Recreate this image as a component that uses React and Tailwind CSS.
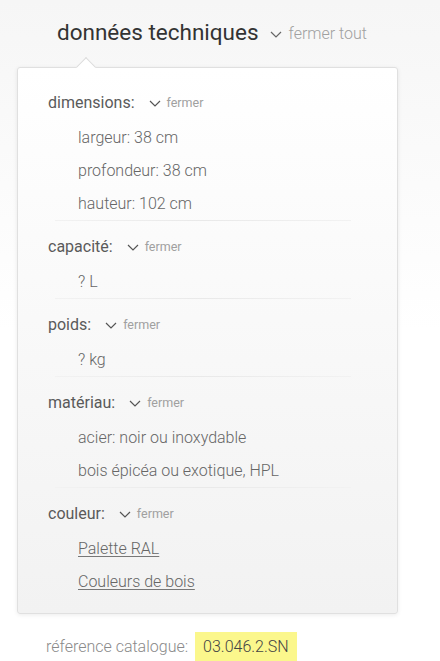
const sections = [
  {
    label: "dimensions:",
    items: ["largeur: 38 cm", "profondeur: 38 cm", "hauteur: 102 cm"],
  },
  { label: "capacité:", items: ["? L"] },
  { label: "poids:", items: ["? kg"] },
  {
    label: "matériau:",
    items: ["acier: noir ou inoxydable", "bois épicéa ou exotique, HPL"],
  },
  { label: "couleur:", items: ["Palette RAL", "Couleurs de bois"], links: true },
];

function Chevron({ className }) {
  return (
    <svg viewBox="0 0 12 7" className={className} fill="none" stroke="currentColor" strokeWidth="1.2">
      <path d="M1 1l5 5 5-5" />
    </svg>
  );
}

function Section({ label, items, links, last }) {
  return (
    <div className="pt-2">
      <div className="flex h-9 items-center">
        <span className="text-[16px] text-[#5a5a5a]">{label}</span>
        <Chevron className="ml-3.5 h-[7px] w-[12px] text-[#555]" />
        <span className="ml-1.5 text-[12.5px] text-[#a0a0a0]">fermer</span>
      </div>
      <ul className="pl-[30px]">
        {items.map((item) => (
          <li key={item} className="flex h-[33px] items-center text-[16px] font-light text-[#666]">
            {links ? <a className="underline underline-offset-2 decoration-[#777]">{item}</a> : item}
          </li>
        ))}
      </ul>
      {!last && (
        <div className="ml-[7px] h-px w-[296px] bg-gradient-to-r from-[#f2f2f2] via-[#e9e9e9] to-[#f2f2f2]" />
      )}
    </div>
  );
}

export default function App() {
  return (
    <div
      className="min-h-[661px] w-[440px] bg-gradient-to-b from-[#f6f6f6] via-white to-white pt-[18px]"
      style={{ fontFamily: "Roboto, 'Liberation Sans', sans-serif" }}
    >
      <div className="flex items-center pl-[57px]">
        <h2 className="text-[22.5px] leading-7 text-[#333]">données techniques</h2>
        <Chevron className="ml-[11px] mt-1 h-[7px] w-[12px] text-[#666]" />
        <span className="ml-[7px] mt-1 text-[16px] font-light text-[#a0a0a0]">fermer tout</span>
      </div>

      <div className="relative mx-[17px] mt-[21px] w-[381px] rounded-[3px] border border-[#e0e0e0] bg-gradient-to-b from-white to-[#f2f2f2] pb-[15px] pl-[30px] pt-[9px] shadow-[0_1px_4px_rgba(0,0,0,0.08)]">
        <div className="absolute -top-[8px] left-[61px] h-[14px] w-[14px] rotate-45 border-l border-t border-[#dcdcdc] bg-white" />
        {sections.map((s, i) => (
          <Section key={s.label} {...s} last={i === sections.length - 1} />
        ))}
      </div>

      <div className="mt-[18px] flex items-center pl-[46px]">
        <span className="text-[16px] font-light text-[#8a8a8a]">réference catalogue:</span>
        <span className="ml-[7px] bg-[#fbf78c] px-[8px] py-[3px] text-[16px] font-light text-[#444]">03.046.2.SN</span>
      </div>
    </div>
  );
}
